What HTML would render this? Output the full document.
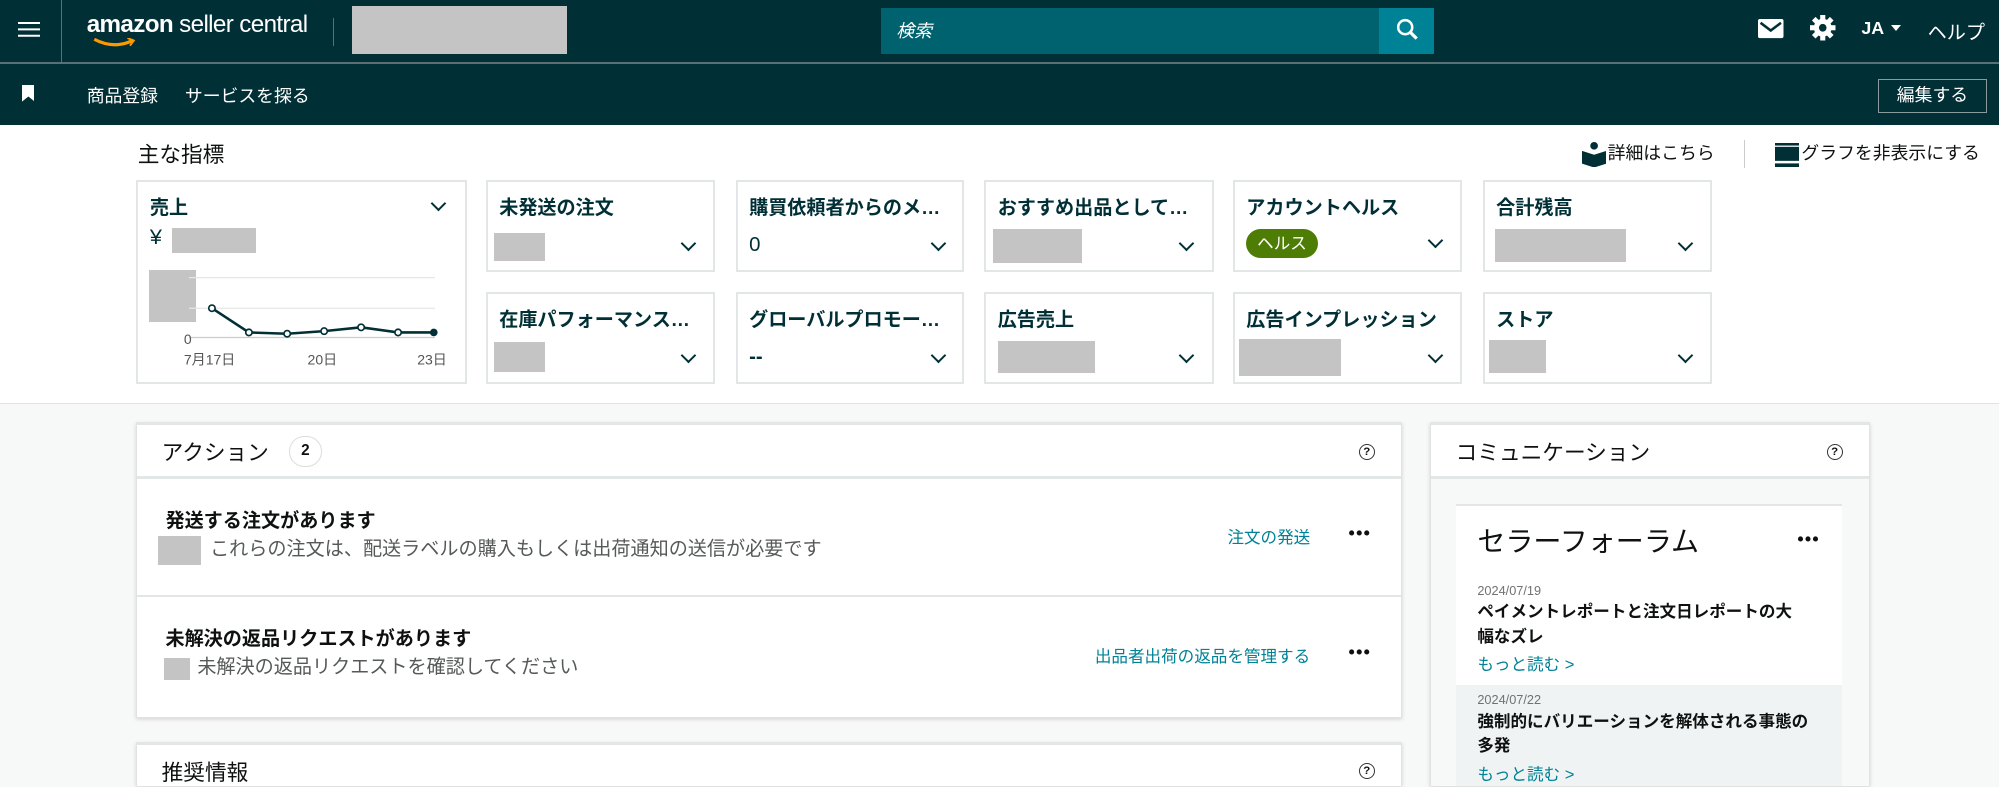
<!DOCTYPE html>
<html><head><meta charset="utf-8"><style>
html{zoom:1.2749;overflow:hidden;height:617px}
body{margin:0;width:1568px;height:617px;overflow:hidden;background:#f7f8f8;font-family:"Liberation Sans","Noto Sans CJK JP",sans-serif;color:#0f1111;position:relative}
.a{position:absolute}
.top{left:0;top:0;width:1568px;height:49px;background:#002f36}
.sep{left:0;top:49px;width:1568px;height:1px;background:#5b7075}
.nav{left:0;top:50px;width:1568px;height:48px;background:#002f36}
.w{color:#fff}
.white{left:0;top:98px;width:1568px;height:218px;background:#fff;border-bottom:1px solid #dfe3e3}
.card{background:#fff;border:2px solid #e3e6e6;box-sizing:border-box}
.ct{font-size:15px;font-weight:bold;color:#002f36;left:9px;top:8px;white-space:nowrap}
.chev{width:7px;height:7px;border-right:2px solid #002f36;border-bottom:2px solid #002f36;transform:rotate(45deg)}
.gb{background:#c4c4c4}
.panel{background:#fff;border:1px solid #dfe3e3;box-shadow:0 1px 3px rgba(0,0,0,.15);border-top:3px solid #e3e6e6;overflow:hidden}
.q{width:11px;height:11px;border:1.5px solid #333;border-radius:50%;font-size:9px;font-weight:bold;text-align:center;line-height:11px}
.dots{font-size:14px;font-weight:bold;letter-spacing:1px}
.link{color:#008296;font-size:13px}
</style></head><body>
<div class="a top"></div><div class="a sep"></div><div class="a nav"></div>
<div class="a" style="left:48px;top:0;width:1px;height:49px;background:#5b7075"></div>
<div class="a" style="left:14px;top:17px;width:17px;height:2px;background:#fff;box-shadow:0 5px 0 #fff,0 10px 0 #fff"></div>
<div class="a w" style="left:68px;top:9px;font-size:19px;letter-spacing:-0.5px"><b>amazon</b> seller central</div>
<svg class="a" style="left:73px;top:30px" width="34" height="8"><path d="M1 1 Q16 9 31 2" stroke="#ff9900" stroke-width="2.5" fill="none"/><path d="M27 0 L32 2 L29 6" stroke="#ff9900" stroke-width="1.5" fill="none"/></svg>
<div class="a" style="left:261px;top:14px;width:1px;height:22px;background:#5b7075"></div>
<div class="a gb" style="left:276px;top:5px;width:169px;height:37px"></div>
<div class="a" style="left:691px;top:6px;width:391px;height:36px;background:#00616f"></div>
<div class="a w" style="left:703px;top:13px;font-size:14px;font-style:italic">検索</div>
<div class="a" style="left:1082px;top:6px;width:43px;height:36px;background:#008296"></div>
<svg class="a" style="left:1094px;top:13px" width="20" height="20"><circle cx="8" cy="8" r="5.5" stroke="#fff" stroke-width="2" fill="none"/><path d="M12 12 L17 17" stroke="#fff" stroke-width="2.5"/></svg>
<svg class="a" style="left:1379px;top:15px" width="20" height="16"><rect x="0" y="0" width="20" height="15" rx="1.5" fill="#fff"/><path d="M2 3 L10 9 L18 3" stroke="#002f36" stroke-width="2" fill="none"/></svg>
<svg class="a" style="left:1420px;top:12px" width="20" height="20" viewBox="0 0 20 20"><g fill="#fff"><circle cx="10" cy="10" r="7"/><rect x="8" y="0" width="4" height="20"/><rect x="0" y="8" width="20" height="4"/><rect x="8" y="0" width="4" height="20" transform="rotate(45 10 10)"/><rect x="8" y="0" width="4" height="20" transform="rotate(-45 10 10)"/></g><circle cx="10" cy="10" r="3" fill="#002f36"/></svg>
<div class="a w" style="left:1460px;top:14px;font-size:14px;font-weight:bold">JA</div>
<div class="a" style="left:1483px;top:20px;border-left:4.5px solid transparent;border-right:4.5px solid transparent;border-top:5px solid #fff"></div>
<div class="a w" style="left:1512px;top:13px;font-size:15px">ヘルプ</div>
<svg class="a" style="left:17px;top:67px" width="10" height="14"><path d="M0 0 H10 V13 L5 9 L0 13Z" fill="#fff"/></svg>
<div class="a w" style="left:68px;top:64px;font-size:14px">商品登録</div>
<div class="a w" style="left:145px;top:64px;font-size:14px">サービスを探る</div>
<div class="a w" style="left:1473px;top:62px;width:84px;height:25px;border:1px solid #8a9a9d;font-size:14px;text-align:center;line-height:25px">編集する</div>

<div class="a white"></div>
<div class="a" style="left:108px;top:108px;font-size:17px;color:#0f1111">主な指標</div>
<svg class="a" style="left:1241px;top:111px" width="19" height="20"><circle cx="9.5" cy="3" r="3" fill="#002f36"/><path d="M0 7 L9.5 10 L19 7 V17 L9.5 20 L0 17Z" fill="#002f36"/></svg>
<div class="a" style="left:1261px;top:109px;font-size:14px;color:#0f1111">詳細はこちら</div>
<div class="a" style="left:1368px;top:110px;width:1px;height:22px;background:#ccc"></div>
<svg class="a" style="left:1392px;top:112px" width="19" height="19"><rect y="0" width="19" height="2" fill="#002f36"/><rect y="3" width="19" height="11" fill="#002f36"/><rect y="16" width="19" height="3" fill="#002f36"/></svg>
<div class="a" style="left:1413px;top:109px;font-size:14px;color:#0f1111">グラフを非表示にする</div>

<div class="a card" style="left:107px;top:141px;width:259px;height:160px">
<div class="a ct">売上</div><div class="a chev" style="left:231px;top:13px"></div>
<div class="a" style="left:9px;top:33px;font-size:17px;color:#002f36">¥</div>
<div class="a gb" style="left:26px;top:36px;width:66px;height:20px"></div>
<div class="a gb" style="left:8px;top:69px;width:37px;height:41px"></div>
<svg class="a" style="left:0;top:0" width="259" height="160"><g stroke="#e6e6e6" stroke-width="1"><line x1="40" y1="75" x2="233" y2="75"/><line x1="40" y1="99" x2="233" y2="99"/><line x1="40" y1="122" x2="233" y2="122" stroke="#ccc"/></g>
<polyline points="58,99 87,118 117,119 146,117 175,114 204,118 232,118" fill="none" stroke="#002f36" stroke-width="2"/>
<g fill="#fff" stroke="#002f36" stroke-width="1.3"><circle cx="58" cy="99" r="2.5"/><circle cx="87" cy="118" r="2.5"/><circle cx="117" cy="119" r="2.5"/><circle cx="146" cy="117" r="2.5"/><circle cx="175" cy="114" r="2.5"/><circle cx="204" cy="118" r="2.5"/></g><circle cx="232" cy="118" r="3" fill="#002f36"/>
<g font-size="11" fill="#555" font-family="Liberation Sans,Noto Sans CJK JP,sans-serif"><text x="36" y="127">0</text><text x="36" y="143">7月17日</text><text x="133" y="143">20日</text><text x="219" y="143">23日</text></g></svg>
</div>

<div class="a card" style="left:381px;top:141px;width:180px;height:72px"><div class="a ct">未発送の注文</div><div class="a gb" style="left:5px;top:40px;width:40px;height:22px"></div><div class="a chev" style="left:153px;top:44px"></div></div>
<div class="a card" style="left:577px;top:141px;width:179px;height:72px"><div class="a ct">購買依頼者からのメ…</div><div class="a" style="left:9px;top:41px;font-size:16px;color:#002f36">0</div><div class="a chev" style="left:153px;top:44px"></div></div>
<div class="a card" style="left:772px;top:141px;width:180px;height:72px"><div class="a ct">おすすめ出品として…</div><div class="a gb" style="left:5px;top:37px;width:70px;height:27px"></div><div class="a chev" style="left:153px;top:44px"></div></div>
<div class="a card" style="left:967px;top:141px;width:180px;height:72px"><div class="a ct">アカウントヘルス</div><div class="a" style="left:9px;top:37px;width:56px;height:23px;border-radius:12px;background:#4e7d06;color:#fff;font-size:13px;text-align:center;line-height:23px">ヘルス</div><div class="a chev" style="left:153px;top:42px"></div></div>
<div class="a card" style="left:1163px;top:141px;width:180px;height:72px"><div class="a ct">合計残高</div><div class="a gb" style="left:8px;top:37px;width:103px;height:26px"></div><div class="a chev" style="left:153px;top:44px"></div></div>

<div class="a card" style="left:381px;top:229px;width:180px;height:72px"><div class="a ct">在庫パフォーマンス…</div><div class="a gb" style="left:5px;top:38px;width:40px;height:23px"></div><div class="a chev" style="left:153px;top:44px"></div></div>
<div class="a card" style="left:577px;top:229px;width:179px;height:72px"><div class="a ct">グローバルプロモー…</div><div class="a" style="left:9px;top:41px;font-size:16px;color:#002f36;font-weight:bold">--</div><div class="a chev" style="left:153px;top:44px"></div></div>
<div class="a card" style="left:772px;top:229px;width:180px;height:72px"><div class="a ct">広告売上</div><div class="a gb" style="left:9px;top:37px;width:76px;height:25px"></div><div class="a chev" style="left:153px;top:44px"></div></div>
<div class="a card" style="left:967px;top:229px;width:180px;height:72px"><div class="a ct">広告インプレッション</div><div class="a gb" style="left:3px;top:35px;width:80px;height:29px"></div><div class="a chev" style="left:153px;top:44px"></div></div>
<div class="a card" style="left:1163px;top:229px;width:180px;height:72px"><div class="a ct">ストア</div><div class="a gb" style="left:3px;top:36px;width:45px;height:26px"></div><div class="a chev" style="left:153px;top:44px"></div></div>

<div class="a panel" style="left:107px;top:331px;width:991px;height:229px">
<div class="a" style="left:19px;top:9px;font-size:17px">アクション</div>
<div class="a" style="left:119px;top:9px;width:24px;height:22px;border:1px solid #ddd;border-radius:12px;font-size:12px;text-align:center;line-height:22px;font-weight:bold">2</div>
<div class="a q" style="left:958px;top:15px">?</div>
<div class="a" style="left:0;top:40px;width:991px;height:2px;background:#e3e6e6"></div>
<div class="a" style="left:22px;top:63px;font-size:15px;font-weight:bold">発送する注文があります</div>
<div class="a gb" style="left:16px;top:87px;width:34px;height:23px"></div>
<div class="a" style="left:57px;top:85px;font-size:15px;color:#565959">これらの注文は、配送ラベルの購入もしくは出荷通知の送信が必要です</div>
<div class="a link" style="left:855px;top:78px">注文の発送</div>
<div class="a dots" style="left:950px;top:77px">•••</div>
<div class="a" style="left:0;top:133px;width:991px;height:2px;background:#e3e6e6"></div>
<div class="a" style="left:22px;top:155px;font-size:15px;font-weight:bold">未解決の返品リクエストがあります</div>
<div class="a gb" style="left:21px;top:183px;width:20px;height:17px"></div>
<div class="a" style="left:47px;top:177px;font-size:15px;color:#565959">未解決の返品リクエストを確認してください</div>
<div class="a link" style="left:751px;top:171px">出品者出荷の返品を管理する</div>
<div class="a dots" style="left:950px;top:170px">•••</div>
</div>

<div class="a panel" style="left:107px;top:582px;width:991px;height:32px;border-bottom:none">
<div class="a" style="left:19px;top:9px;font-size:17px">推奨情報</div>
<div class="a q" style="left:958px;top:14px">?</div>
</div>

<div class="a panel" style="left:1122px;top:331px;width:343px;height:283px;background:#f7f8f8;border-bottom:none">
<div class="a" style="left:0;top:0;width:343px;height:40px;background:#fff"></div>
<div class="a" style="left:19px;top:9px;font-size:17px">コミュニケーション</div>
<div class="a q" style="left:310px;top:15px">?</div>
<div class="a" style="left:0;top:40px;width:343px;height:2px;background:#e3e6e6"></div>
<div class="a" style="left:19px;top:62px;width:303px;height:230px;background:#fff;border-top:2px solid #e3e6e6">
<div class="a" style="left:17px;top:10px;font-size:22px;color:#0f1111">セラーフォーラム</div>
<div class="a dots" style="left:268px;top:18px">•••</div>
<div class="a" style="left:17px;top:60px;font-size:10px;color:#6f7373">2024/07/19</div>
<div class="a" style="left:17px;top:74px;width:250px;font-size:13px;font-weight:bold;line-height:19px">ペイメントレポートと注文日レポートの大幅なズレ</div>
<div class="a link" style="left:17px;top:114px">もっと読む &gt;</div>
<div class="a" style="left:0;top:140px;width:303px;height:100px;background:#f0f3f3"></div>
<div class="a" style="left:17px;top:146px;font-size:10px;color:#6f7373">2024/07/22</div>
<div class="a" style="left:17px;top:160px;width:270px;font-size:13px;font-weight:bold;line-height:19px">強制的にバリエーションを解体される事態の多発</div>
<div class="a link" style="left:17px;top:200px">もっと読む &gt;</div>
</div>
</div>
</body></html>
